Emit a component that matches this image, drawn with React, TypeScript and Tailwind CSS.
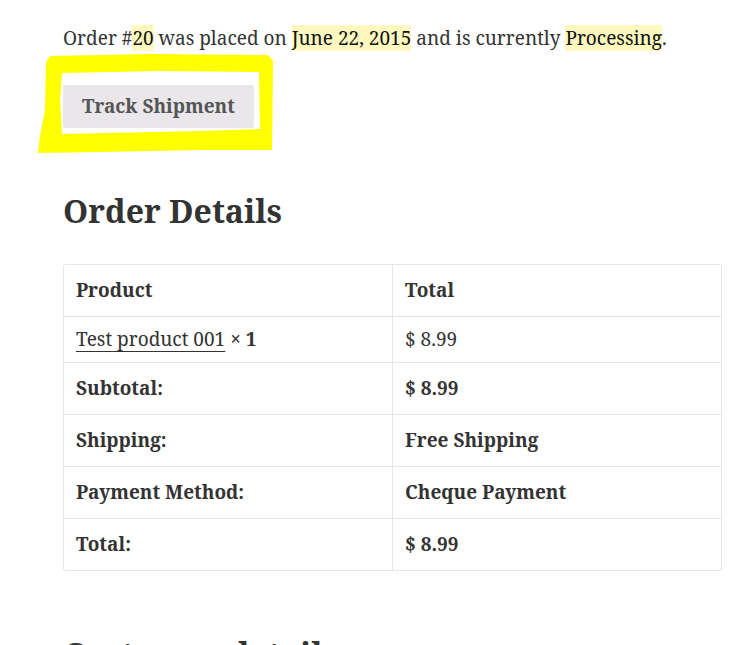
import React from "react";

const font = { fontFamily: '"Noto Serif", "DejaVu Serif", "Liberation Serif", serif' };

function Row({ label, value, bold, h }: { label: React.ReactNode; value: React.ReactNode; bold?: boolean; h: string }) {
  return (
    <div className={`grid grid-cols-[329px_1fr] border-t border-[#e6e6e6] ${h}`}>
      <div className={`flex items-center pl-[12px] border-r border-[#e6e6e6] ${bold ? "font-bold" : ""}`}>{label}</div>
      <div className={`flex items-center pl-[12px] ${bold ? "font-bold" : ""}`}>{value}</div>
    </div>
  );
}

export default function App() {
  return (
    <div className="relative w-[738px] h-[645px] overflow-hidden bg-white text-[#333]" style={font}>
      <div className="pl-[63px] pt-[25px] pr-[16px]">
        <p className="text-[19px] leading-[27px]">
          Order #<mark className="bg-[#fff9c0] text-[#111]">20</mark> was placed on{" "}
          <mark className="bg-[#fff9c0] text-[#111]">June 22, 2015</mark> and is currently{" "}
          <mark className="bg-[#fff9c0] text-[#111]">Processing</mark>.
        </p>
        <button className="mt-[33px] w-[191px] h-[43px] rounded-[2px] bg-[#e9e7ea] text-[#555] font-bold text-[19px]">
          Track Shipment
        </button>
        <h2 className="mt-[63px] text-[32px] font-bold leading-[40px] text-[#333]">Order Details</h2>
        <div className="mt-[33px] w-[659px] border border-[#e6e6e6] rounded-[3px] text-[19px] border-t-0">
          <div className="grid grid-cols-[329px_1fr] h-[52px] border-t border-[#e6e6e6] rounded-t-[3px] font-bold">
            <div className="flex items-center pl-[12px] border-r border-[#e6e6e6]">Product</div>
            <div className="flex items-center pl-[12px]">Total</div>
          </div>
          <Row
            h="h-[46px]"
            label={
              <span>
                <span className="underline decoration-1 underline-offset-[5px]">Test product 001</span>{" "}
                <span className="font-bold">× 1</span>
              </span>
            }
            value="$ 8.99"
          />
          <Row h="h-[52px]" bold label="Subtotal:" value="$ 8.99" />
          <Row h="h-[52px]" bold label="Shipping:" value="Free Shipping" />
          <Row h="h-[52px]" bold label="Payment Method:" value="Cheque Payment" />
          <Row h="h-[52px]" bold label="Total:" value="$ 8.99" />
        </div>
        <h2 className="mt-[63px] text-[32px] font-bold leading-[40px] text-[#333]">Customer details</h2>
      </div>
      <svg className="absolute left-0 top-0 pointer-events-none" width="738" height="645">
        <path
          fillRule="evenodd"
          fill="#ffff00"
          d="M50 56 L150 54 L268 55 L273 61 L272 150 L200 150 L100 152 L38 153 L40 136 L45 110 L46 62 Z M62 73 L160 71 L259 72 L260 129 L200 131 L62 134 L60 100 Z"
        />
      </svg>
    </div>
  );
}
